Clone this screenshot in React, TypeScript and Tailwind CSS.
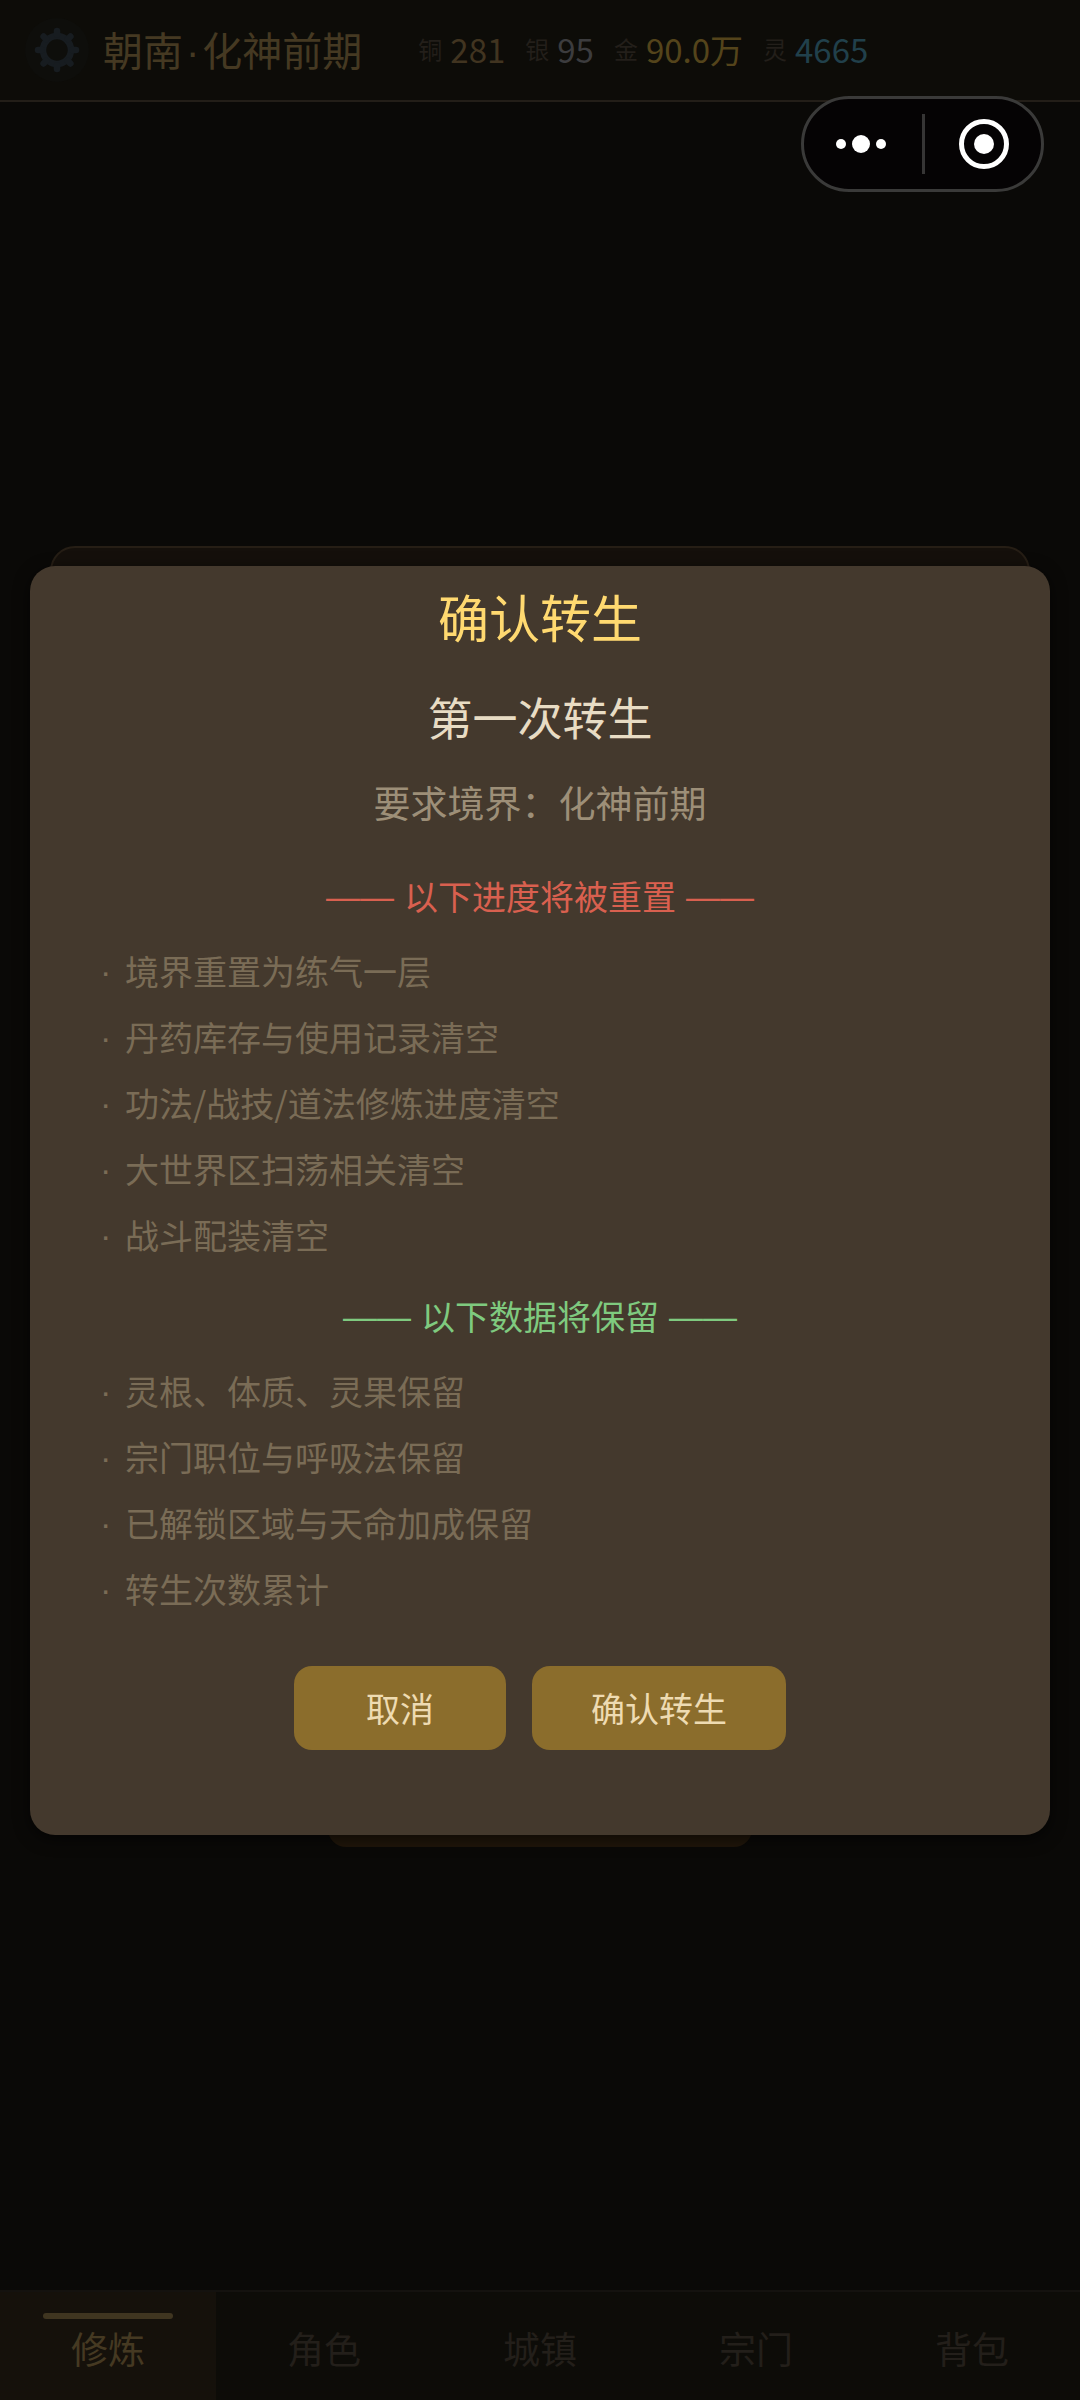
import React from 'react';

const currencies = [
  { label: '铜', value: '281', color: 'text-[#413420]' },
  { label: '银', value: '95', color: 'text-[#3c3c3e]' },
  { label: '金', value: '90.0万', color: 'text-[#54441b]' },
  { label: '灵', value: '4665', color: 'text-[#21404b]' },
];

const resetItems = [
  '境界重置为练气一层',
  '丹药库存与使用记录清空',
  '功法/战技/道法修炼进度清空',
  '大世界区扫荡相关清空',
  '战斗配装清空',
];

const keptItems = [
  '灵根、体质、灵果保留',
  '宗门职位与呼吸法保留',
  '已解锁区域与天命加成保留',
  '转生次数累计',
];

const tabs = ['修炼', '角色', '城镇', '宗门', '背包'];

const toothAngles = [0, 45, 90, 135, 180, 225, 270, 315];

const GearIcon = () => (
  <svg viewBox="-32 -32 64 64" className="h-16 w-16" fill="none" stroke="#171c20" aria-hidden="true">
    <circle r="14" strokeWidth="6.5" />
    {toothAngles.map((angle) => (
      <path key={angle} d="M0 -15.5V-19" strokeWidth="6.5" strokeLinecap="round" transform={`rotate(${angle})`} />
    ))}
  </svg>
);

const Header = () => (
  <header className="flex h-[102px] items-center border-b-2 border-[#231e18] bg-[#0d0c08] pl-[25px]">
    <button type="button" aria-label="设置" className="rounded-full bg-[#0e0e0b]">
      <GearIcon />
    </button>
    <h1 className="ml-3.5 text-[40px] leading-[60px] whitespace-nowrap text-[#453922]">
      朝南<span className="mx-[3px] font-['Liberation_Sans',sans-serif]">·</span>化神前期
    </h1>
    <ul className="ml-14 flex gap-5 pb-0.5">
      {currencies.map((item) => (
        <li key={item.label} className="flex items-center gap-2 leading-[44px]">
          <span className="text-[24px] text-[#231f1a]">{item.label}</span>
          <span className={`text-[33px] ${item.color}`}>{item.value}</span>
        </li>
      ))}
    </ul>
  </header>
);

// Mini program menu, floats above everything
const Capsule = () => (
  <div className="absolute top-24 right-9 z-20 flex h-24 w-[243px] items-center rounded-full border-3 border-[#3a3a39] bg-[#050304]">
    <button type="button" aria-label="更多" className="flex h-full flex-1 items-center justify-center pr-1">
      <svg viewBox="0 0 50 18" className="h-[18px] w-[50px]" fill="#fff" aria-hidden="true">
        <circle cx="5" cy="9" r="5" />
        <circle cx="25" cy="9" r="9" />
        <circle cx="45" cy="9" r="5" />
      </svg>
    </button>
    <span className="h-[60px] w-[3px] bg-[#363535]" />
    <button type="button" aria-label="关闭" className="flex h-full flex-1 items-center justify-center pl-0.5">
      <svg viewBox="0 0 50 50" className="h-[50px] w-[50px]" aria-hidden="true">
        <circle cx="25" cy="25" r="22.5" fill="none" stroke="#fff" strokeWidth="5" />
        <circle cx="25" cy="25" r="10" fill="#fff" />
      </svg>
    </button>
  </div>
);

interface SectionProps {
  title: string;
  color: string;
  items: string[];
}

const Section: React.FC<SectionProps> = ({ title, color, items }) => (
  <section className="w-full">
    <h3 className={`flex justify-center gap-2.5 text-[34px] leading-[44px] ${color}`}>
      <span className="font-['Liberation_Sans',sans-serif]" aria-hidden="true">——</span>
      {title}
      <span className="font-['Liberation_Sans',sans-serif]" aria-hidden="true">——</span>
    </h3>
    <ul className="mt-5 pl-[70px] text-[34px] leading-[66px] text-[#7a6c56]">
      {items.map((item) => (
        <li key={item} className="flex">
          <span className="w-[25px] font-['Liberation_Sans',sans-serif]">·</span>
          {item}
        </li>
      ))}
    </ul>
  </section>
);

const RebirthDialog = () => (
  <div className="absolute inset-0 z-10 flex items-center justify-center px-[30px]">
    <div
      role="dialog"
      aria-modal="true"
      aria-labelledby="rebirth-title"
      className="flex w-full flex-col items-center rounded-[25px] bg-[#44392d] pt-5 pb-[85px] shadow-[0_4px_16px_rgba(0,0,0,0.6)]"
    >
      <h2 id="rebirth-title" className="text-[51px] leading-[60px] text-[#ffd970]">确认转生</h2>
      <p className="mt-11 text-[45px] leading-[54px] text-[#e8dcc4]">第一次转生</p>
      <p className="mt-9 mb-[50px] text-[37px] leading-[44px] text-[#9d8f78]">要求境界：化神前期</p>
      <Section title="以下进度将被重置" color="text-[#d9604f]" items={resetItems} />
      <div className="h-[26px]" />
      <Section title="以下数据将保留" color="text-[#7fca7f]" items={keptItems} />
      <div className="mt-11 flex gap-[26px] text-[34px] leading-[84px] text-[#eedbb2]">
        <button type="button" className="w-[212px] rounded-[18px] bg-[#8b6d2c]">取消</button>
        <button type="button" className="w-[254px] rounded-[18px] bg-[#8b6d2c]">确认转生</button>
      </div>
    </div>
  </div>
);

const TabBar = () => (
  <nav className="grid h-[110px] grid-cols-5 border-t-2 border-[#14120f] bg-[#0d0c08] text-[37px] leading-[44px]">
    {tabs.map((tab, i) => (
      <button
        key={tab}
        type="button"
        className={`relative pt-1 ${i === 0 ? 'bg-[#15110b] text-[#453922]' : 'text-[#231f1a]'}`}
      >
        {i === 0 && <span className="absolute inset-x-[43px] top-[21px] h-1.5 rounded-sm bg-[#3f3520]" />}
        {tab}
      </button>
    ))}
  </nav>
);

export default function App() {
  return (
    <div className="relative flex min-h-screen flex-col bg-[#0a0907] font-['Noto_Sans_CJK_SC','Noto_Sans',sans-serif]">
      <Header />
      <main className="flex flex-1 flex-col items-center justify-center gap-6 px-[50px]">
        <div className="h-[1187px] w-full rounded-[25px] border-2 border-[#261e15] bg-[#15100b]" />
        <div className="h-[90px] w-[424px] rounded-[18px] bg-[#20160a]" />
      </main>
      <TabBar />
      <RebirthDialog />
      <Capsule />
    </div>
  );
}
